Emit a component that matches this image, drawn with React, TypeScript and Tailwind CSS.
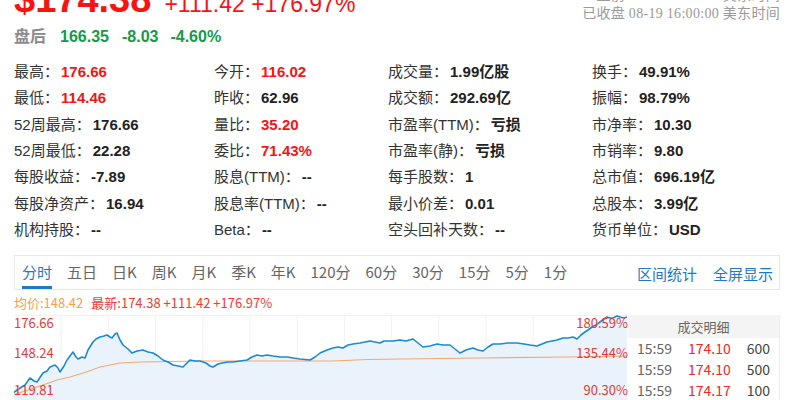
import React from 'react'

const SANS = "font-['Liberation_Sans','Noto_Sans_CJK_SC',sans-serif]"

type Cell = { label: string; value: string; red?: boolean }

const stats: Cell[][] = [
  [
    { label: '最高', value: '176.66', red: true },
    { label: '今开', value: '116.02', red: true },
    { label: '成交量', value: '1.99亿股' },
    { label: '换手', value: '49.91%' },
  ],
  [
    { label: '最低', value: '114.46', red: true },
    { label: '昨收', value: '62.96' },
    { label: '成交额', value: '292.69亿' },
    { label: '振幅', value: '98.79%' },
  ],
  [
    { label: '52周最高', value: '176.66' },
    { label: '量比', value: '35.20', red: true },
    { label: '市盈率(TTM)', value: '亏损' },
    { label: '市净率', value: '10.30' },
  ],
  [
    { label: '52周最低', value: '22.28' },
    { label: '委比', value: '71.43%', red: true },
    { label: '市盈率(静)', value: '亏损' },
    { label: '市销率', value: '9.80' },
  ],
  [
    { label: '每股收益', value: '-7.89' },
    { label: '股息(TTM)', value: '--' },
    { label: '每手股数', value: '1' },
    { label: '总市值', value: '696.19亿' },
  ],
  [
    { label: '每股净资产', value: '16.94' },
    { label: '股息率(TTM)', value: '--' },
    { label: '最小价差', value: '0.01' },
    { label: '总股本', value: '3.99亿' },
  ],
  [
    { label: '机构持股', value: '--' },
    { label: 'Beta', value: '--' },
    { label: '空头回补天数', value: '--' },
    { label: '货币单位', value: 'USD' },
  ],
]

const tabs = ['分时', '五日', '日K', '周K', '月K', '季K', '年K', '120分', '60分', '30分', '15分', '5分', '1分']

// price trace, page coords (x, y)
const priceTrace: [number, number][] = [
  [13, 393], [20, 388], [25, 385], [30, 378], [34, 381], [37, 382], [43, 373], [47, 371], [50, 367],
  [55, 365], [58, 368], [60, 372], [64, 366], [67, 360], [70, 356], [73, 352], [76, 357], [78, 359],
  [82, 357], [85, 358], [88, 350], [93, 342], [96, 339], [100, 337], [104, 336], [107, 335], [110, 337],
  [112, 338], [115, 334], [117, 333], [120, 340], [123, 345], [128, 349], [132, 353], [137, 351],
  [143, 350], [148, 352], [153, 353], [158, 356], [163, 360], [168, 362], [173, 365], [178, 366],
  [183, 367], [187, 363], [190, 360], [195, 361], [200, 361], [206, 363], [210, 366], [213, 367],
  [218, 364], [222, 363], [228, 362], [233, 362], [240, 361], [247, 360], [252, 357], [257, 355],
  [262, 356], [267, 355], [273, 356], [280, 357], [287, 357], [293, 358], [300, 359], [310, 360],
  [315, 357], [320, 353], [327, 350], [333, 348], [338, 347], [343, 348], [348, 345], [353, 344],
  [360, 343], [365, 342], [370, 341], [375, 342], [380, 343], [384, 341], [387, 341], [393, 341],
  [400, 340], [406, 341], [413, 339], [418, 343], [423, 347], [430, 346], [437, 344], [443, 345],
  [450, 345], [455, 349], [460, 353], [466, 350], [473, 348], [478, 350], [483, 351], [488, 347],
  [493, 344], [500, 344], [508, 343], [517, 343], [524, 344], [530, 345], [537, 346], [542, 344],
  [547, 342], [552, 341], [557, 340], [563, 338], [568, 338], [573, 337], [577, 339], [581, 335],
  [585, 332], [588, 330], [592, 327], [596, 325], [600, 322], [604, 319], [607, 317], [610, 318],
  [613, 318], [617, 316], [620, 317], [624, 318], [627, 317],
]

const avgTrace: [number, number][] = [
  [13, 395], [25, 391], [40, 386], [57, 380], [70, 377], [83, 373], [92, 370], [100, 367],
  [110, 365], [120, 363], [140, 362], [170, 361.5], [200, 361], [333, 361], [367, 359.5],
  [400, 359], [480, 358], [567, 357], [600, 356.5], [627, 356],
]

const OX = 14
const OY = 310

function toPts(pts: [number, number][]) {
  return pts.map(([x, y]) => `${(x - OX).toFixed(1)},${(y - OY).toFixed(1)}`).join(' ')
}

function Chart() {
  const line = toPts(priceTrace)
  const first = priceTrace[0]
  const last = priceTrace[priceTrace.length - 1]
  const area = `${(first[0] - OX).toFixed(1)},100 ${line} ${(last[0] - OX).toFixed(1)},100`
  const grid = Array.from({ length: 12 }, (_, i) => 47.2 * (i + 1))
  return (
    <svg width="614" height="90" viewBox="0 0 614 90" className="block">
      <line x1="0" y1="5.5" x2="614" y2="5.5" stroke="#f0f0f0" strokeWidth="1" />
      {grid.map((x) => (
        <line key={x} x1={x} y1="5" x2={x} y2="90" stroke="#f1f1f1" strokeWidth="1" />
      ))}
      <polygon points={area} fill="#eaf3fc" />
      <polyline points={toPts(avgTrace)} fill="none" stroke="#f5a86a" strokeWidth="1.2" />
      <polyline points={line} fill="none" stroke="#1a8ad4" strokeWidth="1.6" strokeLinejoin="round" />
    </svg>
  )
}

export default function App() {
  return (
    <div className={`w-[800px] h-[400px] overflow-hidden bg-white ${SANS}`}>
      <div className="pl-[14px] pr-[20px] w-[800px]">
        {/* header: price + close time */}
        <div className="flex justify-between items-start -mt-[20px] h-[38px]">
          <div className="flex items-baseline text-[#f51414] leading-[38px]">
            <span className="text-[38px] font-bold">$174.38</span>
            <span className="text-[23px] ml-[13px]">+111.42 +176.97%</span>
          </div>
          <div className="mt-[6px] text-right text-[14px] tracking-[0.3px] text-[#9a9a9a] font-['Liberation_Serif','Noto_Sans_CJK_SC',serif]">
            <div className="leading-[20px]">盘前 08-19 09:29:59 美东时间</div>
            <div className="leading-[16px]">已收盘 08-19 16:00:00 美东时间</div>
          </div>
        </div>

        {/* after hours */}
        <div className="flex items-center h-[20px] mt-[9px] text-[16px] font-bold">
          <span className="text-[#8a8a8a]">盘后</span>
          <span className="text-[#159a48] ml-[14px]">166.35</span>
          <span className="text-[#159a48] ml-[13px]">-8.03</span>
          <span className="text-[#159a48] ml-[12px]">-4.60%</span>
        </div>

        {/* stats grid */}
        <div className="grid grid-cols-[200px_174px_204px_1fr] mt-[12px] text-[15px]">
          {stats.flat().map((c, i) => (
            <div key={i} className="h-[26.33px] flex items-center whitespace-nowrap">
              <span className="text-[#333]">{c.label}：</span>
              <span className={`font-bold ml-[2px] ${c.red ? 'text-[#f51414]' : 'text-[#222]'}`}>{c.value}</span>
            </div>
          ))}
        </div>

        {/* tab bar */}
        <div className="mt-[12px] h-[35px] border border-[#e8e8e8] flex justify-between items-stretch pl-[7px] pr-[6px] font-['Noto_Sans_CJK_SC',sans-serif] text-[15px]">
          <div className="flex gap-[15px]">
            {tabs.map((t, i) => (
              <div
                key={t}
                className={`flex items-center pt-[2px] border-b-[3px] ${i === 0 ? 'text-[#1f78c8] border-[#1f78c8]' : 'text-[#666] border-transparent'}`}
              >
                {t}
              </div>
            ))}
          </div>
          <div className="flex gap-[16px] text-[#1f78c8] items-center pt-[2px]">
            <span>区间统计</span>
            <span>全屏显示</span>
          </div>
        </div>

        {/* avg / latest */}
        <div className="flex items-center h-[16px] mt-[4px] text-[13px] font-['Noto_Sans_CJK_SC',sans-serif]">
          <span className="text-[#f7a04a]">均价:148.42</span>
          <span className="text-[#ee3a2f] ml-[8px]">最新:174.38 +111.42 +176.97%</span>
        </div>

        {/* chart + trade detail */}
        <div className="flex font-['Noto_Sans_CJK_SC',sans-serif]">
          <div className="relative w-[614px] h-[90px]">
            <Chart />
            <span className="absolute left-0 top-[5px] text-[13px] leading-[16px] text-[#e53935]">176.66</span>
            <span className="absolute left-0 top-[35px] text-[13px] leading-[16px] text-[#e53935]">148.24</span>
            <span className="absolute left-0 top-[72px] text-[13px] leading-[16px] text-[#e53935]">119.81</span>
            <span className="absolute right-0 top-[5px] text-[13px] leading-[16px] text-[#e53935]">180.59%</span>
            <span className="absolute right-0 top-[35px] text-[13px] leading-[16px] text-[#e53935]">135.44%</span>
            <span className="absolute right-0 top-[72px] text-[13px] leading-[16px] text-[#e53935]">90.30%</span>
          </div>
          <div className="w-[152px] mt-[5px] border-r border-[#eee]">
            <div className="h-[23px] bg-[#f4f4f4] flex items-center justify-center text-[13px] text-[#666]">成交明细</div>
            {[
              ['15:59', '174.10', '600'],
              ['15:59', '174.10', '500'],
              ['15:59', '174.17', '100'],
            ].map((r, i) => (
              <div key={i} className="h-[21px] flex items-center text-[14px] pl-[9px] pr-[9px]">
                <span className="text-[#666] w-[51px]">{r[0]}</span>
                <span className="text-[#ee2a24]">{r[1]}</span>
                <span className="ml-auto text-[#444]">{r[2]}</span>
              </div>
            ))}
          </div>
        </div>
      </div>
    </div>
  )
}
